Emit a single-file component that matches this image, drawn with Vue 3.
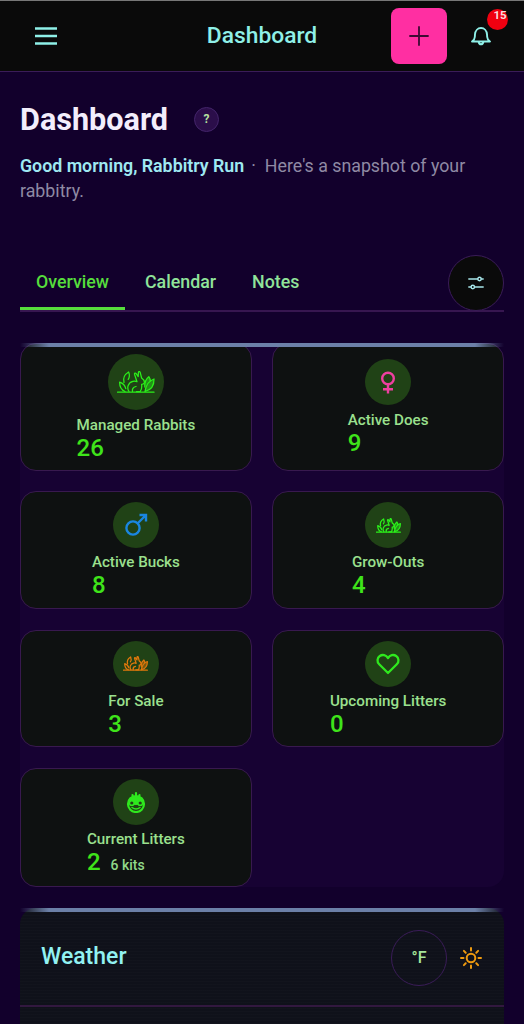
<script setup>
const cards = [
  { label: 'Managed Rabbits', value: 26, icon: 'rabbit', color: '#2bf01a', big: true },
  { label: 'Active Does', value: 9, icon: 'female', color: '#ee3fa0' },
  { label: 'Active Bucks', value: 8, icon: 'male', color: '#1a86e0' },
  { label: 'Grow-Outs', value: 4, icon: 'rabbit', color: '#2bf01a' },
  { label: 'For Sale', value: 3, icon: 'rabbit', color: '#e0780c' },
  { label: 'Upcoming Litters', value: 0, icon: 'heart', color: '#2fe81e' },
  { label: 'Current Litters', value: 2, icon: 'paw', color: '#2fe81e', sub: '6 kits' }
]
</script>

<template>
  <div class="page">
    <svg class="defs" width="0" height="0" aria-hidden="true">
      <symbol id="rabbit-mark" viewBox="0 0 38 22">
        <g fill="none" stroke="currentColor" stroke-linecap="round" stroke-linejoin="round">
          <path d="M0.500 21.200H37" />
          <path d="M12 20.500C9.500 17 11 11.500 16 10.400c1.500-.3 3-.1 4 .3L17.600 3.500C17.200 2 18.400 1.600 19.200 2.600l2 3 .2-4.200c.2-1.200 1.400-1.200 1.800 0l1.400 5.600c2 1.400 3.200 3.400 2.600 5-.4 1-1.600 1.400-2.600 1.400.4 2.600 0 5.200-1.400 7.100" />
          <path d="M15.500 20.500c-.5-2.500 1-4.500 3.500-5M19.500 20.500h3.500" />
          <path d="M8 20.500C4.500 19 2.600 15.500 2.600 11.200c3 .9 5.400 3.300 6.200 6.500" />
          <path d="M7 11.500C5.800 7.500 7.600 3.500 11.600 1c1.200 2.800 1 5.300-.4 7.400" />
          <path d="M28 20.500c.8-6.500 4.200-10.800 9-12.500 .2 6.200-3.200 11-9 12.500z" fill="currentColor" fill-opacity="0.45" />
          <path d="M27.800 16c-.4-4.500 1-8 4-10.300 1 1.400 1.500 2.800 1.500 4.300" fill="currentColor" fill-opacity="0.45" />
        </g>
      </symbol>
    </svg>

    <header class="topbar">
      <button class="menu" aria-label="Menu">
        <svg width="24" height="20" viewBox="0 0 24 20" fill="none" stroke="#8ff0e8" stroke-width="2.6">
          <path d="M1 2.500h22M1 10h22M1 17.500h22" />
        </svg>
      </button>
      <div class="bar-title">Dashboard</div>
      <button class="add" aria-label="Add">
        <svg width="20" height="20" viewBox="0 0 20 20" fill="none" stroke="#3c0a33" stroke-width="1.800" stroke-linecap="round">
          <path d="M10 1v18M1 10h18" />
        </svg>
      </button>
      <button class="bell" aria-label="Notifications">
        <svg width="22" height="22" viewBox="0 0 22 22" fill="none" stroke="#8ff0e8" stroke-width="1.900" stroke-linecap="round" stroke-linejoin="round">
          <path d="M2 16.500c1.700-1 2.700-2.500 2.800-4.500l.2-2.700C5.300 5.700 7.700 3 11 3s5.700 2.700 6 6.300l.2 2.700c.1 2 1.100 3.500 2.800 4.500z" />
          <path d="M8.700 17c.2 1.500 1.100 2.300 2.300 2.300s2.100-.8 2.300-2.300" />
        </svg>
        <span class="badge">15</span>
      </button>
    </header>

    <main class="content">
      <div class="title-row">
        <h1>Dashboard</h1>
        <span class="help">?</span>
      </div>
      <p class="greeting"><strong>Good morning, Rabbitry Run</strong><span class="dot">·</span><span>Here's a snapshot of your</span> <span>rabbitry.</span></p>

      <nav class="tabs">
        <a class="tab active">Overview</a>
        <a class="tab">Calendar</a>
        <a class="tab">Notes</a>
        <button class="filter" aria-label="Filter">
          <svg width="16" height="14" viewBox="0 0 16 14" fill="none" stroke="#a8e6ea" stroke-width="1.400" stroke-linecap="round">
            <path d="M.8 3h9M13.200 3h2M.8 11h2.300M6.500 11h8.700" />
            <circle cx="11.500" cy="3" r="1.700" />
            <circle cx="4.800" cy="11" r="1.700" />
          </svg>
        </button>
      </nav>

      <section class="stats">
        <article v-for="card in cards" :key="card.label" class="card">
          <div class="icon" :class="{ big: card.big }" :style="{ color: card.color }">
            <svg v-if="card.icon === 'rabbit'" class="rabbit" :class="{ small: !card.big }" :width="card.big ? 38 : 25" :height="card.big ? 22 : 15">
              <use href="#rabbit-mark" />
            </svg>
            <svg v-else-if="card.icon === 'female'" width="24" height="24" viewBox="0 0 24 24" fill="none" stroke="currentColor" stroke-width="2.400">
              <circle cx="12" cy="8.500" r="5.800" />
              <path d="M12 14.300V23.500M7 19.300h10" />
            </svg>
            <svg v-else-if="card.icon === 'male'" width="24" height="24" viewBox="0 0 24 24" fill="none" stroke="currentColor" stroke-width="2.400">
              <circle cx="9" cy="15" r="6.600" />
              <path d="M14 10 22 2M15.500 2H22V8.500" />
            </svg>
            <svg v-else-if="card.icon === 'heart'" width="24" height="22" viewBox="0 0 24 22" fill="none" stroke="currentColor" stroke-width="2.300" stroke-linejoin="round">
              <path d="M12 20 3.200 11.300C.6 8.700 1.200 4.800 3.800 3c2.800-1.900 6.200-1 8.200 2 2-3 5.400-3.900 8.200-2 2.600 1.800 3.200 5.700.6 8.300z" />
            </svg>
            <svg v-else width="22" height="22" viewBox="0 0 22 22" fill="none" stroke="currentColor" stroke-width="2.200" stroke-linecap="round">
              <circle cx="11" cy="13" r="8" />
              <ellipse cx="11" cy="9.500" rx="7" ry="4.500" fill="currentColor" stroke="none" />
              <circle cx="6.800" cy="12" r="3.100" fill="currentColor" stroke="none" />
              <circle cx="15.200" cy="12" r="3.100" fill="currentColor" stroke="none" />
              <circle cx="6.800" cy="12" r="1.600" fill="#204216" stroke="none" />
              <circle cx="15.200" cy="12" r="1.600" fill="#204216" stroke="none" />
              <path d="M7 16.500c2.300 1.700 5.700 1.700 8 0" stroke-width="1.500" />
              <path d="M7.500 4 8 6M11 2v3.500M14.500 4 14 6" stroke-width="2.200" />
            </svg>
          </div>
          <div class="text">
            <div class="label">{{ card.label }}</div>
            <div class="value-row" :class="{ 'with-sub': card.sub }">
              <span class="value">{{ card.value }}</span>
              <span v-if="card.sub" class="sub">{{ card.sub }}</span>
            </div>
          </div>
        </article>
      </section>

      <section class="weather">
        <div class="weather-head">
          <h2>Weather</h2>
          <button class="unit">°F</button>
          <svg class="sun" width="22" height="22" viewBox="0 0 22 22" fill="none" stroke="#ee9a10" stroke-width="2" stroke-linecap="round">
            <circle cx="11" cy="11" r="4.300" />
            <path d="M11 1v2.500M11 18.500V21M1 11h2.500M18.500 11H21M3.900 3.900l1.800 1.800M16.300 16.300l1.800 1.800M3.900 18.100l1.800-1.800M16.300 5.700l1.800-1.800" />
          </svg>
        </div>
      </section>
    </main>
  </div>
</template>

<style>
html, body { background: #12002c; }
</style>

<style scoped>
.page {
  width: 524px;
  height: 1024px;
  overflow: hidden;
  background: #12002c;
  font-family: Roboto, "Liberation Sans", sans-serif;
}
.defs { position: absolute; }
button {
  padding: 0;
  border: 0;
  background: none;
  font-family: inherit;
  display: flex;
  align-items: center;
  justify-content: center;
}
.topbar {
  display: flex;
  align-items: center;
  box-sizing: border-box;
  height: 72px;
  padding: 0 30px 1px 34px;
  background: #0a0a0a;
  border-top: 1px solid #777;
  border-bottom: 1px solid #3a1c58;
}
.menu { width: 24px; height: 24px; }
.bar-title {
  flex: 1;
  margin-left: 75px;
  text-align: center;
  font-size: 22.800px;
  font-weight: 500;
  color: #8ff0e8;
}
.add {
  width: 56px;
  height: 56px;
  border-radius: 8px;
  background: #ff2fa2;
}
.bell {
  position: relative;
  width: 26px;
  height: 26px;
  margin-left: 21px;
}
.badge {
  position: absolute;
  top: -14px;
  left: 19px;
  width: 21px;
  height: 21px;
  padding-left: 5px;
  box-sizing: border-box;
  border-radius: 50%;
  background: #f00010;
  color: #f6dede;
  font-size: 11.500px;
  font-weight: 700;
  line-height: 13px;
  text-align: center;
}
.content { padding: 0 20px; }
.title-row {
  display: flex;
  align-items: center;
  height: 40px;
  margin-top: 27px;
}
h1 {
  margin: 0;
  font-size: 30.600px;
  font-weight: 700;
  color: #f3eefc;
}
.help {
  width: 25px;
  height: 25px;
  margin-left: 26px;
  border-radius: 50%;
  box-sizing: border-box;
  border: 1px solid #43246a;
  background: #2b0e4a;
  color: #b6e0a0;
  font-size: 12px;
  font-weight: 700;
  display: flex;
  align-items: center;
  justify-content: center;
}
.greeting {
  margin: 14px 0 0;
  font-size: 17.800px;
  line-height: 25px;
  color: #8f8aa4;
}
.greeting strong { font-weight: 600; color: #9fe9f2; }
.dot { margin: 0 9px 0 7px; }
.tabs {
  display: flex;
  align-items: center;
  height: 57px;
  margin-top: 52px;
  border-bottom: 2px solid #371650;
  position: relative;
  box-sizing: border-box;
}
.tab {
  padding: 0 16px;
  height: 55px;
  box-sizing: border-box;
  line-height: 54px;
  font-size: 17.800px;
  font-weight: 500;
  color: #90e39a;
  margin-right: 4px;
}
.tab.active {
  color: #56dd3c;
  box-shadow: inset 0 -3px 0 #56dd3c;
}
.filter {
  position: absolute;
  right: 0;
  top: 0;
  width: 56px;
  height: 56px;
  box-sizing: border-box;
  border-radius: 50%;
  background: #0a0a0a;
  border: 1px solid #3a1c58;
}
.stats {
  display: grid;
  grid-template-columns: 1fr 1fr;
  column-gap: 20.500px;
  row-gap: 20.800px;
  margin-top: 31px;
  background: #170233;
  border-radius: 16px;
  position: relative;
}
.stats::before, .weather::before {
  content: "";
  position: absolute;
  top: 0;
  left: 0;
  right: 0;
  height: 4px;
  background: linear-gradient(90deg, transparent, #6c80a8 6%, #6c80a8 94%, transparent);
  z-index: 1;
}
.card {
  display: flex;
  flex-direction: column;
  align-items: center;
  justify-content: center;
  box-sizing: border-box;
  padding: 10px 10px 9.500px;
  background: #0e1111;
  border: 1px solid #38194f;
  border-radius: 16px;
}
.icon {
  width: 46px;
  height: 46px;
  border-radius: 50%;
  background: #204216;
  display: flex;
  align-items: center;
  justify-content: center;
}
.icon.big { width: 56px; height: 56px; }
.rabbit { stroke-width: 1.25; }
.rabbit.small { stroke-width: 1.9; }
.text { margin-top: 4px; }
.card:nth-child(-n+2) .text { margin-top: 5px; margin-bottom: -1px; }
.label {
  font-size: 15.200px;
  font-weight: 500;
  line-height: 20px;
  color: #9be08e;
}
.value-row { display: flex; align-items: baseline; }
.value-row.with-sub { margin-bottom: 2px; }
.value {
  font-size: 24px;
  font-weight: 500;
  line-height: 26px;
  color: #3fe41a;
}
.sub {
  margin-left: 10px;
  font-size: 14px;
  font-weight: 500;
  color: #90d888;
}
.weather {
  position: relative;
  margin-top: 21px;
  height: 200px;
  border-radius: 16px 16px 0 0;
  background:
    repeating-linear-gradient(0deg, rgba(255,255,255,0.012) 0 1px, transparent 1px 3px),
    #0f111a;
}
.weather-head {
  display: flex;
  align-items: center;
  height: 99px;
  padding: 2px 20px 0 21px;
  border-bottom: 2px solid #32183f;
  box-sizing: border-box;
}
h2 {
  flex: 1;
  margin: 0 0 3px;
  font-size: 23px;
  font-weight: 500;
  color: #92f2f2;
}
.unit {
  width: 56px;
  height: 56px;
  box-sizing: border-box;
  border: 1px solid #3a1c58;
  border-radius: 50%;
  color: #a6e69a;
  font-size: 16px;
  font-weight: 500;
}
.sun { margin-left: 13px; margin-right: 2px; }
</style>
